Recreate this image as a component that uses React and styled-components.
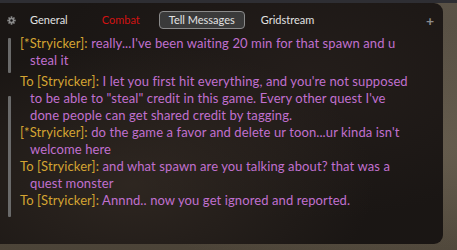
import React from "react"
import styled, { createGlobalStyle } from "styled-components"

const GlobalStyle = createGlobalStyle`
  html, body {
    margin: 0;
    padding: 0;
    background: #4f473d;
  }
  body {
    font-family: "Lato", "Liberation Sans", sans-serif;
  }
`

const messages = [
  { from: "[*Stryicker]", text: "really...I've been waiting 20 min for that spawn and u steal it", gap: true },
  { from: "To [Stryicker]", text: "I let you first hit everything, and you're not supposed to be able to \"steal\" credit in this game. Every other quest I've done people can get shared credit by tagging." },
  { from: "[*Stryicker]", text: "do the game a favor and delete ur toon...ur kinda isn't welcome here" },
  { from: "To [Stryicker]", text: "and what spawn are you talking about? that was a quest monster" },
  { from: "To [Stryicker]", text: "Annnd.. now you get ignored and reported." },
]

const tabs = [
  { label: "General", space: 32 },
  { label: "Combat", tone: "alert", space: 18 },
  { label: "Tell Messages", active: true, space: 15 },
  { label: "Gridstream", space: 0 },
]

const Gear = () => (
  <svg width="9" height="9" viewBox="0 0 16 16">
    <g fill="#8a8a8a">
      <circle cx="8" cy="8" r="5" />
      {[0, 45, 90, 135].map((a) => (
        <rect key={a} x="6.5" y="0.5" width="3" height="15" transform={`rotate(${a} 8 8)`} />
      ))}
    </g>
    <circle cx="8" cy="8" r="2.2" fill="#121010" />
  </svg>
)

const App = () => {
  return (
    <Stone>
      <GlobalStyle />
      <TopStrip />
      <Panel>
        <TabBar>
          <GearSlot><Gear /></GearSlot>
          {tabs.map((t) => (
            <Tab key={t.label} $active={t.active} $tone={t.tone} $space={t.space}>{t.label}</Tab>
          ))}
          <Plus>+</Plus>
        </TabBar>
        <Body>
          <Gutter>
            <Bar $top={3} $height={35} />
            <Bar $top={23} $height={121} />
          </Gutter>
          <Log>
            {messages.map((m, i) => (
              <Line key={i} $gap={m.gap}>
                <Name>{m.from}</Name>: <Said>{m.text}</Said>
              </Line>
            ))}
          </Log>
        </Body>
      </Panel>
    </Stone>
  )
}

export default App

const Stone = styled.div`
  width: 457px;
  height: 250px;
  overflow: hidden;
  background:
    radial-gradient(ellipse at 90% 60%, rgba(140,128,108,0.35), transparent 60%),
    linear-gradient(180deg, #3b3a3c 0px, #3b3a3c 3px, #5a5246 3px, #4c4438 100%);
  display: flex;
  flex-direction: column;
`

const TopStrip = styled.div`
  height: 3px;
  background: #2e2e33;
`

const Panel = styled.div`
  width: 443px;
  height: 241px;
  background:
    radial-gradient(ellipse at 30% 75%, rgba(70,58,48,0.45), transparent 55%),
    radial-gradient(ellipse at 70% 30%, rgba(50,40,36,0.4), transparent 60%),
    #1a1614;
  border-radius: 0 9px 9px 0;
  display: flex;
  flex-direction: column;
`

const TabBar = styled.div`
  height: 22px;
  margin-top: 6px;
  display: flex;
  align-items: center;
  padding: 0 9px 0 7px;
  font-size: 11px;
`

const GearSlot = styled.span`
  width: 9px;
  height: 9px;
  display: flex;
  margin-right: 13px;
`

const Tab = styled.span`
  color: ${(p) => (p.$tone === "alert" ? "#d21212" : "#e2e2e2")};
  padding: ${(p) => (p.$active ? "1px 9px" : "1px 0")};
  margin-right: ${(p) => p.$space}px;
  border: 1px solid ${(p) => (p.$active ? "#8a8a8a" : "transparent")};
  border-radius: 4px;
  background: ${(p) => (p.$active ? "#3a3a3a" : "transparent")};
  line-height: 14px;
`

const Plus = styled.span`
  margin-left: auto;
  color: #8c8c8c;
  font-size: 14px;
  font-weight: bold;
`

const Body = styled.div`
  display: flex;
  padding-top: 4px;
`

const Gutter = styled.div`
  width: 12px;
  padding-left: 8px;
  display: flex;
  flex-direction: column;
`

const Bar = styled.div`
  width: 3px;
  margin-top: ${(p) => p.$top}px;
  height: ${(p) => p.$height}px;
  background: #6a6a6a;
  border-radius: 1px;
`

const Log = styled.div`
  width: 392px;
  font-size: 13px;
  letter-spacing: 0.1px;
  line-height: 17px;
`

const Line = styled.div`
  padding-left: 10px;
  text-indent: -10px;
  color: #d4a432;
  margin-bottom: ${(p) => (p.$gap ? "4px" : "0")};
`

const Name = styled.span`
  color: #d4a432;
`

const Said = styled.span`
  color: #c070cf;
`
